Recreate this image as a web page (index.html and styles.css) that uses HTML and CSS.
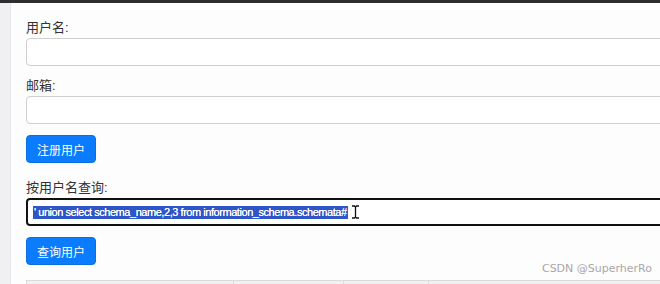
FILE: index.html
```html
<!DOCTYPE html>
<html lang="zh">
<head>
    <meta charset="UTF-8">
    <title>用户注册</title>
    <link rel="stylesheet" href="styles.css">
</head>
<body>
    <div class="topbar"></div>
    <div class="page">
        <div class="side"></div>
        <div class="card">
            <div class="field">
                <label>用户名:</label>
                <div class="input"></div>
            </div>
            <div class="field">
                <label>邮箱:</label>
                <div class="input"></div>
            </div>
            <button class="btn">注册用户</button>

            <div class="field query">
                <label>按用户名查询:</label>
                <div class="input focused">
                    <span class="sel">' union select schema_name,2,3 from information_schema.schemata#</span>
                    <svg class="ibeam" width="9" height="14" viewBox="0 0 9 14">
                        <path d="M1 1h2.5L4.5 2l1-1H8M4.5 2v10M1 13h2.5l1-1 1 1H8" fill="none" stroke="#111" stroke-width="1.3"/>
                    </svg>
                </div>
            </div>
            <button class="btn">查询用户</button>

            <div class="table">
                <div class="cell c1"></div>
                <div class="cell c2"></div>
                <div class="cell c3"></div>
                <div class="cell c4"></div>
            </div>
        </div>
    </div>
    <div class="watermark">CSDN @SuperherRo</div>
</body>
</html>
```

FILE: styles.css
```css
body {
    margin: 0;
    background-color: #f0f0f2;
    font-family: "Liberation Sans", "Noto Sans CJK SC", sans-serif;
    overflow: hidden;
    height: 100vh;
}

.topbar {
    height: 3px;
    background-color: #2e2e2e;
}

.page {
    display: flex;
    height: calc(100vh - 3px);
}

.side {
    width: 10px;
    flex-shrink: 0;
    border-right: 1px solid #e6e6e8;
}

.card {
    flex: 1;
    min-width: 0;
    background-color: #fdfdfd;
    padding: 16px 0 0 15px;
    overflow: hidden;
}

.field {
    margin-bottom: 11px;
}

.field label {
    display: block;
    font-size: 13px;
    line-height: 18px;
    color: #333;
    margin-bottom: 1px;
}

.input {
    width: calc(100% + 10px);
    height: 26px;
    border: 1px solid #cfcfcf;
    border-radius: 4px;
    background-color: #fff;
}

.input.focused {
    height: 24px;
    border: 2px solid #111;
    display: flex;
    align-items: center;
    padding-left: 5px;
}

.sel {
    background-color: #2f55c6;
    color: #fff;
    font-size: 11px;
    line-height: 13px;
    letter-spacing: -0.45px;
    padding: 0 1px;
    text-shadow: 0 0 0.5px #fff;
}

.ibeam {
    margin-left: 3px;
}

.btn {
    display: block;
    width: 70px;
    height: 28px;
    padding: 0;
    border: 1px solid #0a6fe0;
    border-radius: 4px;
    background-color: #0b7cff;
    color: #fff;
    font-family: "Noto Sans CJK SC", sans-serif;
    font-size: 12px;
    margin-bottom: 16px;
}

.query {
    margin-bottom: 11px;
}

.query + .btn {
    margin-bottom: 15px;
}

.table {
    display: flex;
    height: 20px;
    width: calc(100% + 10px);
    border: 1px solid #dcdcdc;
    background-color: #f1f1f1;
}

.cell {
    border-right: 1px solid #dcdcdc;
}

.c1 { width: 206px; }
.c2 { width: 109px; }
.c3 { width: 84px; }
.c4 { flex: 1; border-right: none; }

.watermark {
    position: absolute;
    right: 8px;
    top: 262px;
    font-family: "DejaVu Sans", sans-serif;
    font-size: 11px;
    color: #a8a8a8;
}
```
